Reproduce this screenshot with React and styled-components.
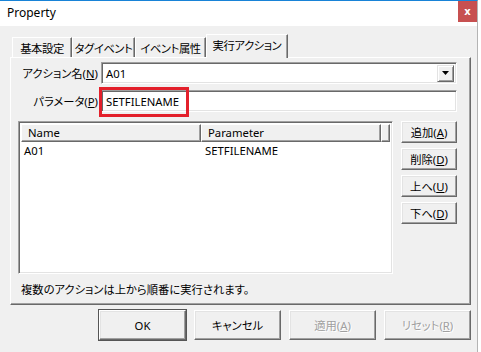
import styled, { createGlobalStyle } from 'styled-components';

const GlobalStyle = createGlobalStyle`
  html, body {
    margin: 0;
    padding: 0;
    background: #ffffff;
  }
  body {
    font-family: "Noto Sans", "Noto Sans CJK JP", sans-serif;
    font-size: 11.3px;
    color: #000;
    font-feature-settings: "palt";
  }
  * { box-sizing: border-box; }
`;

const Window = styled.div`
  width: 478px;
  height: 352px;
  border-top: 1px solid #1883d7;
  border-right: 1px solid #b4b4b4;
  background: #f0f0f0;
  display: flex;
  flex-direction: column;
  overflow: hidden;
`;

const TitleBar = styled.div`
  height: 25px;
  flex: none;
  background: #ffffff;
  display: flex;
  align-items: flex-start;
  justify-content: space-between;
  padding-left: 7px;
`;

const Title = styled.span`
  line-height: 24px;
  font-size: 12px;
`;

const CloseButton = styled.div`
  width: 19px;
  height: 21px;
  background: #c75050;
  color: #fff;
  font-family: "DejaVu Sans", sans-serif;
  font-weight: bold;
  font-size: 10px;
  display: flex;
  align-items: center;
  justify-content: center;
`;

const Body = styled.div`
  flex: 1;
  display: flex;
  flex-direction: column;
  padding: 8px 6px 0 10px;
`;

const TabStrip = styled.div`
  display: flex;
  align-items: flex-start;
  height: 23px;
  padding-left: 2px;
  position: relative;
  z-index: 1;
`;

const Tab = styled.div`
  height: ${(p) => (p.$active ? '24px' : '20px')};
  margin-top: ${(p) => (p.$active ? '0' : '3px')};
  width: ${(p) => p.$w}px;
  background: #f0f0f0;
  border-top: 1px solid #ffffff;
  border-left: 1px solid #ffffff;
  border-right: 1px solid #696969;
  box-shadow: inset -1px 0 0 #a0a0a0;
  display: flex;
  align-items: center;
  justify-content: center;
  white-space: nowrap;
  letter-spacing: -0.4px;
  padding-bottom: ${(p) => (p.$active ? '3px' : '0')};
`;

const Panel = styled.div`
  height: 248px;
  border-top: 1px solid #ffffff;
  border-left: 1px solid #ffffff;
  border-right: 1px solid #696969;
  border-bottom: 1px solid #696969;
  box-shadow: inset -1px -1px 0 #a0a0a0;
  padding: 4px 13px 0 0;
  display: flex;
  flex-direction: column;
`;

const FormRow = styled.div`
  display: flex;
  align-items: center;
  height: 22px;
  margin-bottom: ${(p) => p.$mb || 0}px;
`;

const Label = styled.div`
  width: 88px;
  text-align: right;
  padding-right: 1px;
  margin-right: 2px;
  white-space: nowrap;
`;

const Key = styled.span`
  text-decoration: underline;
  text-underline-offset: 1px;
`;

const Sunken = styled.div`
  position: relative;
  flex: 1;
  height: 100%;
  background: #fff;
  border-top: 1px solid #a0a0a0;
  border-left: 1px solid #a0a0a0;
  border-right: 1px solid #ffffff;
  border-bottom: 1px solid #ffffff;
  box-shadow: inset 1px 1px 0 #696969, inset -1px -1px 0 #e3e3e3;
  display: flex;
  align-items: center;
  padding: 0 2px 0 4px;
`;

const FieldText = styled.span`
  flex: 1;
`;

const DropButton = styled.div`
  width: 17px;
  height: 17px;
  background: #f0f0f0;
  border-top: 1px solid #e3e3e3;
  border-left: 1px solid #e3e3e3;
  border-right: 1px solid #696969;
  border-bottom: 1px solid #696969;
  box-shadow: inset 1px 1px 0 #fff, inset -1px -1px 0 #a0a0a0;
  display: flex;
  align-items: center;
  justify-content: center;
`;

const Highlight = styled.div`
  position: absolute;
  left: -3px;
  top: -4px;
  width: 90px;
  height: 30px;
  border: 3px solid #e3202b;
  pointer-events: none;
`;

const ListArea = styled.div`
  display: flex;
  gap: 8px;
  margin-left: 7px;
  height: 153px;
`;

const ListView = styled.div`
  width: 376px;
  height: 100%;
  background: #fff;
  border-top: 1px solid #a0a0a0;
  border-left: 1px solid #a0a0a0;
  border-right: 1px solid #ffffff;
  border-bottom: 1px solid #ffffff;
  box-shadow: inset 1px 1px 0 #696969, inset -1px -1px 0 #e3e3e3;
  padding: 2px;
`;

const Grid = styled.div`
  display: grid;
  grid-template-columns: 180px 180px 1fr;
`;

const HeadCell = styled.div`
  height: 18px;
  background: #f0f0f0;
  border-top: 1px solid #ffffff;
  border-left: 1px solid #ffffff;
  border-right: 1px solid #696969;
  border-bottom: 1px solid #696969;
  box-shadow: inset -1px -1px 0 #a0a0a0;
  padding-left: 6px;
  line-height: 16px;
  white-space: nowrap;
`;

const Cell = styled.div`
  height: 17px;
  line-height: 17px;
  padding-left: ${(p) => p.$pl || 3}px;
  white-space: nowrap;
`;

const SideButtons = styled.div`
  display: flex;
  flex-direction: column;
  gap: 5px;
`;

const Button = styled.div`
  width: ${(p) => p.$w || 56}px;
  height: ${(p) => p.$h || 22}px;
  background: #f0f0f0;
  border-top: 1px solid #ffffff;
  border-left: 1px solid #ffffff;
  border-right: 1px solid #696969;
  border-bottom: 1px solid #696969;
  box-shadow: inset -1px -1px 0 #a0a0a0, inset 1px 1px 0 #e3e3e3;
  display: flex;
  align-items: center;
  justify-content: center;
  white-space: nowrap;
  color: ${(p) => (p.$disabled ? '#a0a0a0' : '#000')};
  text-shadow: ${(p) => (p.$disabled ? '1px 1px 0 #fff' : 'none')};
  ${(p) => p.$default && 'outline: 1px solid #555; outline-offset: 0;'}
`;

const Note = styled.div`
  margin: 8px 0 0 10px;
  line-height: 16px;
`;

const Footer = styled.div`
  display: flex;
  justify-content: flex-end;
  gap: 8px;
  padding-top: 5px;
`;

function Caret() {
  return (
    <svg width="7" height="4" viewBox="0 0 7 4">
      <path d="M0 0h7L3.5 4z" fill="#000" />
    </svg>
  );
}

export default function App() {
  return (
    <>
      <GlobalStyle />
      <Window>
        <TitleBar>
          <Title>Property</Title>
          <CloseButton>x</CloseButton>
        </TitleBar>
        <Body>
          <TabStrip>
            <Tab $w={60}>基本設定</Tab>
            <Tab $w={63}>タグイベント</Tab>
            <Tab $w={71}>イベント属性</Tab>
            <Tab $w={82} $active>実行アクション</Tab>
          </TabStrip>
          <Panel>
            <FormRow $mb={6}>
              <Label>アクション名(<Key>N</Key>)</Label>
              <Sunken>
                <FieldText>A01</FieldText>
                <DropButton><Caret /></DropButton>
              </Sunken>
            </FormRow>
            <FormRow $mb={9}>
              <Label>パラメータ(<Key>P</Key>)</Label>
              <Sunken>
                <FieldText>SETFILENAME</FieldText>
                <Highlight />
              </Sunken>
            </FormRow>
            <ListArea>
              <ListView>
                <Grid>
                  <HeadCell>Name</HeadCell>
                  <HeadCell>Parameter</HeadCell>
                  <HeadCell />
                  <Cell>A01</Cell>
                  <Cell $pl={4}>SETFILENAME</Cell>
                  <Cell />
                </Grid>
              </ListView>
              <SideButtons>
                <Button>追加(<Key>A</Key>)</Button>
                <Button>削除(<Key>D</Key>)</Button>
                <Button>上へ(<Key>U</Key>)</Button>
                <Button>下へ(<Key>D</Key>)</Button>
              </SideButtons>
            </ListArea>
            <Note>複数のアクションは上から順番に実行されます。</Note>
          </Panel>
          <Footer>
            <Button $w={87} $h={30} $default>OK</Button>
            <Button $w={87} $h={30}>キャンセル</Button>
            <Button $w={87} $h={30} $disabled>適用(<Key>A</Key>)</Button>
            <Button $w={87} $h={30} $disabled>リセット(<Key>R</Key>)</Button>
          </Footer>
        </Body>
      </Window>
    </>
  );
}
